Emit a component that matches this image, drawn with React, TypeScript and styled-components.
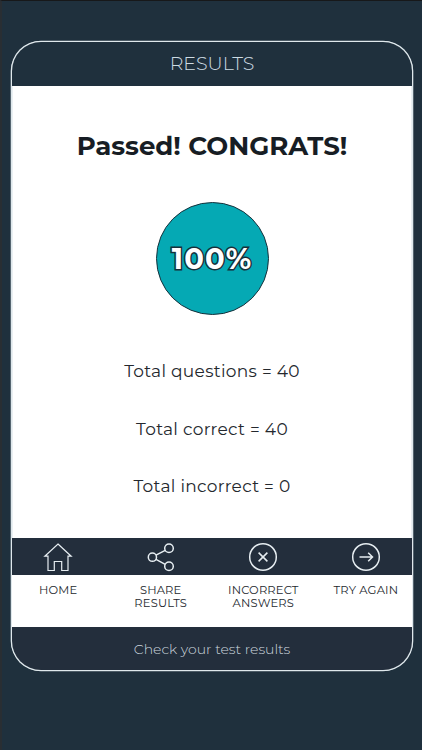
import React from "react";
import styled, { createGlobalStyle } from "styled-components";

const GlobalStyle = createGlobalStyle`
  * { box-sizing: border-box; }
  html, body { margin: 0; background: #1f303d; }
  body { font-family: Montserrat, Inter, sans-serif; }
`;

const Screen = styled.main`
  width: 422px;
  height: 750px;
  overflow: hidden;
  display: flex;
  flex-direction: column;
  padding: 40px 9px 0 9px;
  background: #1f303d;
  border-top: 1px solid #17181a;
  border-left: 2px solid #292e33;
`;

const Card = styled.section`
  height: 630px;
  display: flex;
  flex-direction: column;
  overflow: hidden;
  border: 1.5px solid #dfe8ec;
  box-shadow: inset 0 0 0 0.5px #d5e0e6, 0 0 0 0.3px #d5e0e6;
  border-radius: 30px;
  background: #fff;
`;

const Header = styled.header`
  height: 43.5px;
  display: flex;
  align-items: center;
  justify-content: center;
  padding-top: 2px;
  background: #1f303d;
`;

const Footer = styled.footer`
  flex: 1;
  display: flex;
  align-items: center;
  justify-content: center;
  padding-top: 2px;
  background: #232e3c;
`;

const Label = styled.span<{ $size: number; $weight: number; $color: string; $spacing?: number; $leading?: number }>`
  display: block;
  margin: 0;
  white-space: nowrap;
  font-size: ${(p) => p.$size}px;
  font-weight: ${(p) => p.$weight};
  line-height: ${(p) => p.$leading ?? 1.2};
  color: ${(p) => p.$color};
  letter-spacing: ${(p) => p.$spacing ?? 0}px;
`;

const Body = styled.div`
  height: 452px;
  display: flex;
  flex-direction: column;
  align-items: center;
  padding-top: 45px;
`;

const Score = styled.div`
  width: 113px;
  height: 113px;
  margin-top: 40px;
  flex: none;
  display: flex;
  align-items: center;
  justify-content: center;
  border: 1.5px solid #17313b;
  border-radius: 50%;
  background: #05a9b4;
`;

const ScoreText = styled.span`
  font-size: 29px;
  font-weight: 700;
  line-height: 1;
  letter-spacing: 1.1px;
  color: #fff;
  -webkit-text-stroke: 3px #17303a;
  paint-order: stroke fill;
`;

const Stats = styled.div`
  margin-top: 46.5px;
  display: flex;
  flex-direction: column;
  align-items: center;
  gap: 37px;
`;

const Nav = styled.nav`
  display: grid;
  grid-template-columns: repeat(4, 102.6px);
  grid-template-rows: 37px 52px;
  justify-content: center;
  background: linear-gradient(#232e3c 37px, #fff 37px);
`;

const IconCell = styled.div`
  display: flex;
  align-items: center;
  justify-content: center;
  padding-top: 1px;
`;

const Caption = styled.div`
  display: flex;
  flex-direction: column;
  align-items: center;
  padding-top: 9px;
`;

const Icon = styled.svg`
  width: 30px;
  height: 30px;
  fill: none;
  stroke: #e6edf1;
  stroke-width: 1.5;
`;

const HomeIcon = () => (
  <Icon viewBox="0 0 30 30">
    <path strokeWidth="1.2" d="M15 2 28.2 14.2H25V28.5H18.7V19.5H11.3V28.5H5V14.2H1.8Z" />
  </Icon>
);
const ShareIcon = () => (
  <Icon viewBox="0 0 30 30">
    <circle cx="6.4" cy="15.2" r="4.1" />
    <circle cx="23" cy="6.3" r="4.3" />
    <circle cx="23" cy="24.3" r="4.3" />
    <path d="M10 13.2 19.2 8.4M10 17.3 19.2 22.3" />
  </Icon>
);
const CrossIcon = () => (
  <Icon viewBox="0 0 30 30">
    <circle cx="15" cy="15" r="13.3" />
    <path d="m10.6 10.6 8.8 8.8m0-8.8-8.8 8.8" />
  </Icon>
);
const ArrowIcon = () => (
  <Icon viewBox="0 0 30 30">
    <circle cx="15" cy="15" r="13.3" />
    <path d="M8.5 15H21.5M17.2 10.7 21.5 15 17.2 19.3" />
  </Icon>
);

const actions: { icon: React.ReactNode; lines: string[] }[] = [
  { icon: <HomeIcon />, lines: ["HOME"] },
  { icon: <ShareIcon />, lines: ["SHARE", "RESULTS"] },
  { icon: <CrossIcon />, lines: ["INCORRECT", "ANSWERS"] },
  { icon: <ArrowIcon />, lines: ["TRY AGAIN"] },
];

const stats = ["Total questions = 40", "Total correct = 40", "Total incorrect = 0"];

export default function App() {
  return (
    <>
      <GlobalStyle />
      <Screen>
        <Card>
          <Header>
            <Label $size={19} $weight={300} $color="#cddbe3">RESULTS</Label>
          </Header>
          <Body>
            <Label as="h1" $size={26} $weight={700} $color="#171d24">Passed! CONGRATS!</Label>
            <Score><ScoreText>100%</ScoreText></Score>
            <Stats>
              {stats.map((text) => (
                <Label key={text} $size={17} $weight={400} $color="#24282e" $spacing={0.3}>{text}</Label>
              ))}
            </Stats>
          </Body>
          <Nav>
            {actions.map((a) => <IconCell key={a.lines[0]}>{a.icon}</IconCell>)}
            {actions.map((a) => (
              <Caption key={a.lines[0]}>
                {a.lines.map((text) => (
                  <Label key={text} $size={11.5} $weight={400} $leading={1.2} $color="#24282e" $spacing={0.15}>{text}</Label>
                ))}
              </Caption>
            ))}
          </Nav>
          <Footer>
            <Label $size={14} $weight={300} $color="#ccd6de">Check your test results</Label>
          </Footer>
        </Card>
      </Screen>
    </>
  );
}
